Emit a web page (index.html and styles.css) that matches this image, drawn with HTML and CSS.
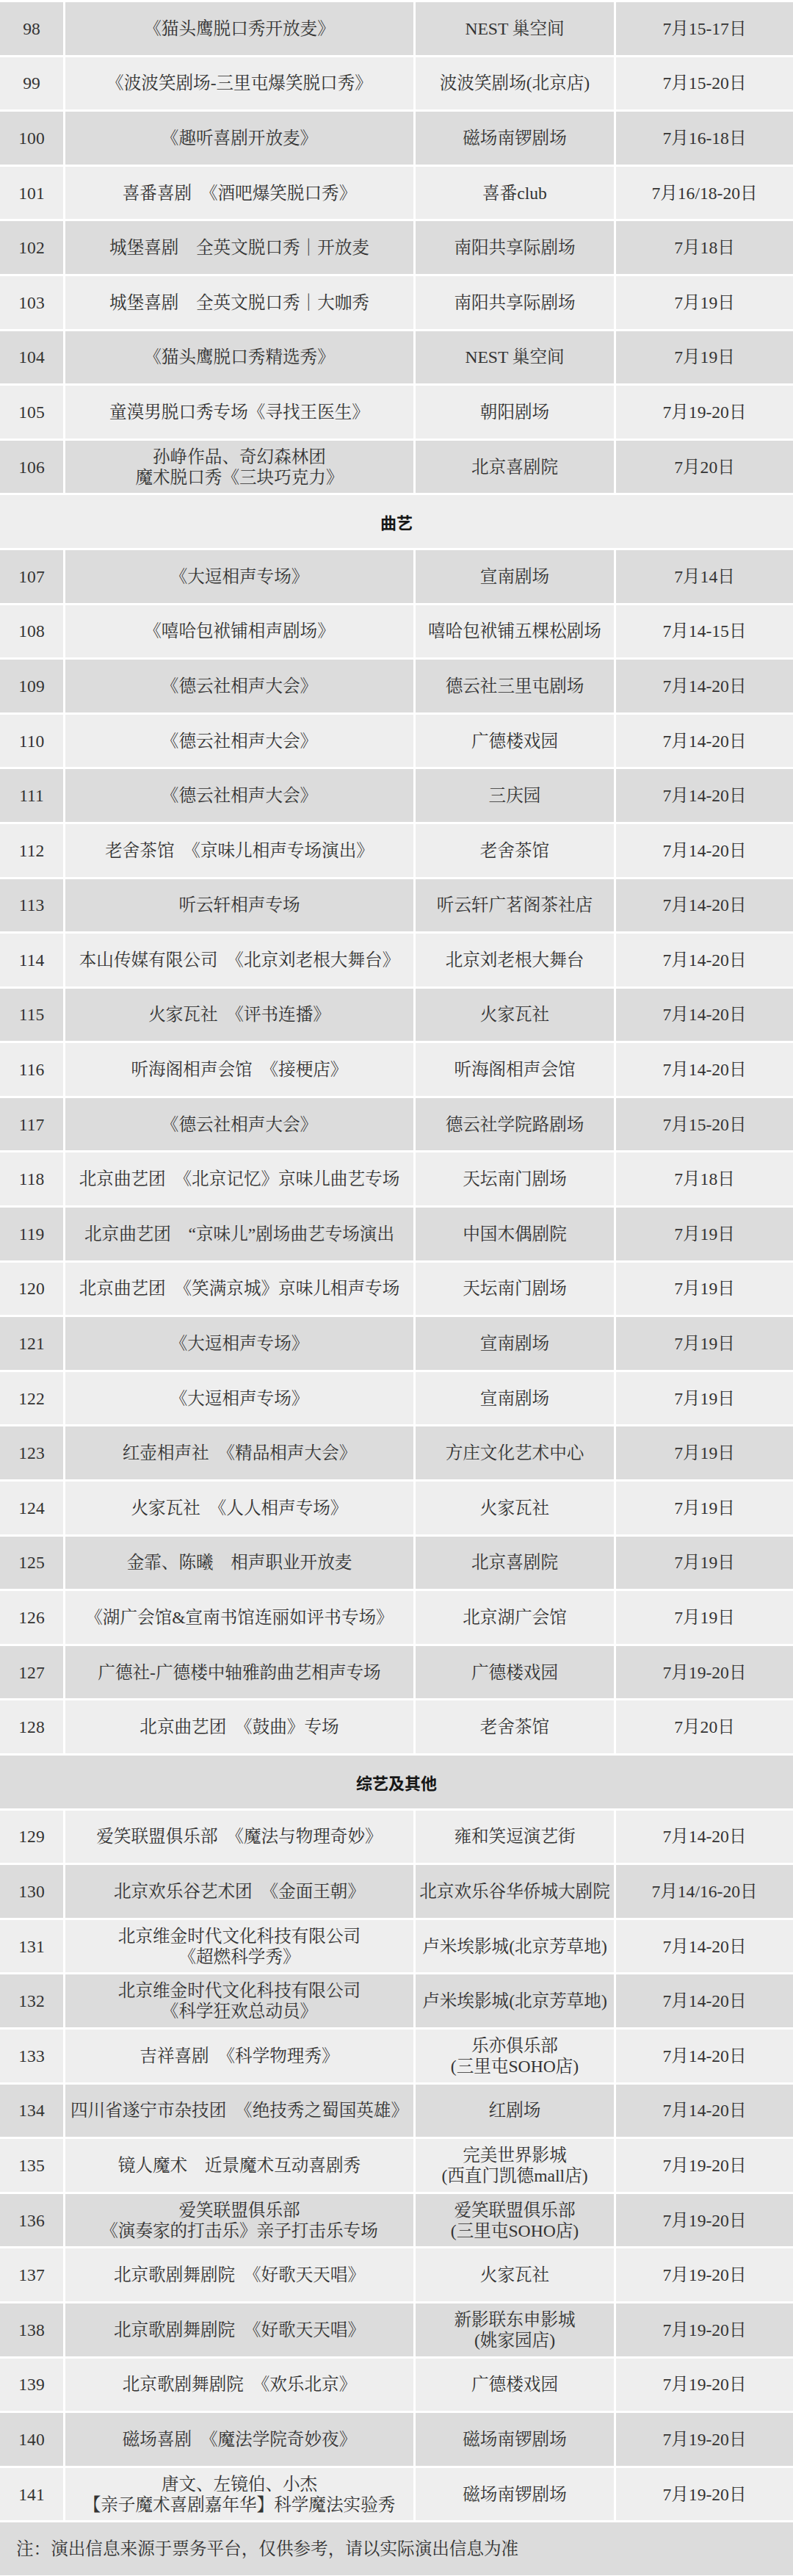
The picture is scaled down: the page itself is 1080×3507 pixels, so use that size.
FILE: index.html
```html
<!DOCTYPE html>
<html lang="zh-CN">
<head>
<meta charset="utf-8">
<title>演出信息</title>
<link rel="stylesheet" href="styles.css">
</head>
<body>
<div class="table">
  <div class="row"><div class="cell">98</div><div class="cell">《猫头鹰脱口秀开放麦》</div><div class="cell">NEST 巢空间</div><div class="cell">7月15-17日</div></div>
  <div class="row"><div class="cell">99</div><div class="cell">《波波笑剧场-三里屯爆笑脱口秀》</div><div class="cell">波波笑剧场(北京店)</div><div class="cell">7月15-20日</div></div>
  <div class="row"><div class="cell">100</div><div class="cell">《趣听喜剧开放麦》</div><div class="cell">磁场南锣剧场</div><div class="cell">7月16-18日</div></div>
  <div class="row"><div class="cell">101</div><div class="cell">喜番喜剧　《酒吧爆笑脱口秀》</div><div class="cell">喜番club</div><div class="cell">7月16/18-20日</div></div>
  <div class="row"><div class="cell">102</div><div class="cell">城堡喜剧　全英文脱口秀｜开放麦</div><div class="cell">南阳共享际剧场</div><div class="cell">7月18日</div></div>
  <div class="row"><div class="cell">103</div><div class="cell">城堡喜剧　全英文脱口秀｜大咖秀</div><div class="cell">南阳共享际剧场</div><div class="cell">7月19日</div></div>
  <div class="row"><div class="cell">104</div><div class="cell">《猫头鹰脱口秀精选秀》</div><div class="cell">NEST 巢空间</div><div class="cell">7月19日</div></div>
  <div class="row"><div class="cell">105</div><div class="cell">童漠男脱口秀专场《寻找王医生》</div><div class="cell">朝阳剧场</div><div class="cell">7月19-20日</div></div>
  <div class="row"><div class="cell">106</div><div class="cell">孙峥作品、奇幻森林团<br>魔术脱口秀《三块巧克力》</div><div class="cell">北京喜剧院</div><div class="cell">7月20日</div></div>
  <div class="row section"><div class="cell">曲艺</div></div>
  <div class="row"><div class="cell">107</div><div class="cell">《大逗相声专场》</div><div class="cell">宣南剧场</div><div class="cell">7月14日</div></div>
  <div class="row"><div class="cell">108</div><div class="cell">《嘻哈包袱铺相声剧场》</div><div class="cell">嘻哈包袱铺五棵松剧场</div><div class="cell">7月14-15日</div></div>
  <div class="row"><div class="cell">109</div><div class="cell">《德云社相声大会》</div><div class="cell">德云社三里屯剧场</div><div class="cell">7月14-20日</div></div>
  <div class="row"><div class="cell">110</div><div class="cell">《德云社相声大会》</div><div class="cell">广德楼戏园</div><div class="cell">7月14-20日</div></div>
  <div class="row"><div class="cell">111</div><div class="cell">《德云社相声大会》</div><div class="cell">三庆园</div><div class="cell">7月14-20日</div></div>
  <div class="row"><div class="cell">112</div><div class="cell">老舍茶馆　《京味儿相声专场演出》</div><div class="cell">老舍茶馆</div><div class="cell">7月14-20日</div></div>
  <div class="row"><div class="cell">113</div><div class="cell">听云轩相声专场</div><div class="cell">听云轩广茗阁茶社店</div><div class="cell">7月14-20日</div></div>
  <div class="row"><div class="cell">114</div><div class="cell">本山传媒有限公司　《北京刘老根大舞台》</div><div class="cell">北京刘老根大舞台</div><div class="cell">7月14-20日</div></div>
  <div class="row"><div class="cell">115</div><div class="cell">火家瓦社　《评书连播》</div><div class="cell">火家瓦社</div><div class="cell">7月14-20日</div></div>
  <div class="row"><div class="cell">116</div><div class="cell">听海阁相声会馆　《接梗店》</div><div class="cell">听海阁相声会馆</div><div class="cell">7月14-20日</div></div>
  <div class="row"><div class="cell">117</div><div class="cell">《德云社相声大会》</div><div class="cell">德云社学院路剧场</div><div class="cell">7月15-20日</div></div>
  <div class="row"><div class="cell">118</div><div class="cell">北京曲艺团　《北京记忆》京味儿曲艺专场</div><div class="cell">天坛南门剧场</div><div class="cell">7月18日</div></div>
  <div class="row"><div class="cell">119</div><div class="cell">北京曲艺团　“京味儿”剧场曲艺专场演出</div><div class="cell">中国木偶剧院</div><div class="cell">7月19日</div></div>
  <div class="row"><div class="cell">120</div><div class="cell">北京曲艺团　《笑满京城》京味儿相声专场</div><div class="cell">天坛南门剧场</div><div class="cell">7月19日</div></div>
  <div class="row"><div class="cell">121</div><div class="cell">《大逗相声专场》</div><div class="cell">宣南剧场</div><div class="cell">7月19日</div></div>
  <div class="row"><div class="cell">122</div><div class="cell">《大逗相声专场》</div><div class="cell">宣南剧场</div><div class="cell">7月19日</div></div>
  <div class="row"><div class="cell">123</div><div class="cell">红壶相声社　《精品相声大会》</div><div class="cell">方庄文化艺术中心</div><div class="cell">7月19日</div></div>
  <div class="row"><div class="cell">124</div><div class="cell">火家瓦社　《人人相声专场》</div><div class="cell">火家瓦社</div><div class="cell">7月19日</div></div>
  <div class="row"><div class="cell">125</div><div class="cell">金霏、陈曦　相声职业开放麦</div><div class="cell">北京喜剧院</div><div class="cell">7月19日</div></div>
  <div class="row"><div class="cell">126</div><div class="cell">《湖广会馆&amp;宣南书馆连丽如评书专场》</div><div class="cell">北京湖广会馆</div><div class="cell">7月19日</div></div>
  <div class="row"><div class="cell">127</div><div class="cell">广德社-广德楼中轴雅韵曲艺相声专场</div><div class="cell">广德楼戏园</div><div class="cell">7月19-20日</div></div>
  <div class="row"><div class="cell">128</div><div class="cell">北京曲艺团　《鼓曲》专场</div><div class="cell">老舍茶馆</div><div class="cell">7月20日</div></div>
  <div class="row section"><div class="cell">综艺及其他</div></div>
  <div class="row"><div class="cell">129</div><div class="cell">爱笑联盟俱乐部　《魔法与物理奇妙》</div><div class="cell">雍和笑逗演艺街</div><div class="cell">7月14-20日</div></div>
  <div class="row"><div class="cell">130</div><div class="cell">北京欢乐谷艺术团　《金面王朝》</div><div class="cell">北京欢乐谷华侨城大剧院</div><div class="cell">7月14/16-20日</div></div>
  <div class="row"><div class="cell">131</div><div class="cell">北京维金时代文化科技有限公司<br>《超燃科学秀》</div><div class="cell">卢米埃影城(北京芳草地)</div><div class="cell">7月14-20日</div></div>
  <div class="row"><div class="cell">132</div><div class="cell">北京维金时代文化科技有限公司<br>《科学狂欢总动员》</div><div class="cell">卢米埃影城(北京芳草地)</div><div class="cell">7月14-20日</div></div>
  <div class="row"><div class="cell">133</div><div class="cell">吉祥喜剧　《科学物理秀》</div><div class="cell">乐亦俱乐部<br>(三里屯SOHO店)</div><div class="cell">7月14-20日</div></div>
  <div class="row"><div class="cell">134</div><div class="cell">四川省遂宁市杂技团　《绝技秀之蜀国英雄》</div><div class="cell">红剧场</div><div class="cell">7月14-20日</div></div>
  <div class="row"><div class="cell">135</div><div class="cell">镜人魔术　近景魔术互动喜剧秀</div><div class="cell">完美世界影城<br>(西直门凯德mall店)</div><div class="cell">7月19-20日</div></div>
  <div class="row"><div class="cell">136</div><div class="cell">爱笑联盟俱乐部<br>《演奏家的打击乐》亲子打击乐专场</div><div class="cell">爱笑联盟俱乐部<br>(三里屯SOHO店)</div><div class="cell">7月19-20日</div></div>
  <div class="row"><div class="cell">137</div><div class="cell">北京歌剧舞剧院　《好歌天天唱》</div><div class="cell">火家瓦社</div><div class="cell">7月19-20日</div></div>
  <div class="row"><div class="cell">138</div><div class="cell">北京歌剧舞剧院　《好歌天天唱》</div><div class="cell">新影联东申影城<br>(姚家园店)</div><div class="cell">7月19-20日</div></div>
  <div class="row"><div class="cell">139</div><div class="cell">北京歌剧舞剧院　《欢乐北京》</div><div class="cell">广德楼戏园</div><div class="cell">7月19-20日</div></div>
  <div class="row"><div class="cell">140</div><div class="cell">磁场喜剧　《魔法学院奇妙夜》</div><div class="cell">磁场南锣剧场</div><div class="cell">7月19-20日</div></div>
  <div class="row"><div class="cell">141</div><div class="cell">唐文、左镜伯、小杰<br>【亲子魔术喜剧嘉年华】科学魔法实验秀</div><div class="cell">磁场南锣剧场</div><div class="cell">7月19-20日</div></div>
  <div class="row note"><div class="cell">注：演出信息来源于票务平台，仅供参考，请以实际演出信息为准</div></div>
</div>
</body>
</html>
```

FILE: styles.css
```css
html, body {
  margin: 0;
  padding: 0;
  background: #ffffff;
}

body {
  width: 1080px;
  font-family: "Liberation Serif", "Noto Serif CJK SC", "Noto Sans CJK SC", serif;
  color: #333333;
}

.table {
  display: flex;
  flex-direction: column;
  gap: 3px;
  padding-top: 3px;
}

.row {
  display: grid;
  grid-template-columns: 86px 474px 270px 1fr;
  column-gap: 3px;
  height: 71.6px;
}

.cell {
  display: flex;
  align-items: center;
  justify-content: center;
  text-align: center;
  font-size: 23.6px;
  line-height: 28px;
  white-space: nowrap;
  background: #eeeeee;
}

.row:nth-child(odd) > .cell {
  background: #dcdcdc;
}

.section {
  grid-template-columns: 1fr;
}

.section > .cell {
  font-family: "Noto Sans CJK SC", sans-serif;
  font-weight: 700;
  font-size: 22px;
  color: #161616;
}

.note {
  grid-template-columns: 1fr;
}

.note > .cell {
  justify-content: flex-start;
  padding-left: 22px;
  text-align: left;
}
```
